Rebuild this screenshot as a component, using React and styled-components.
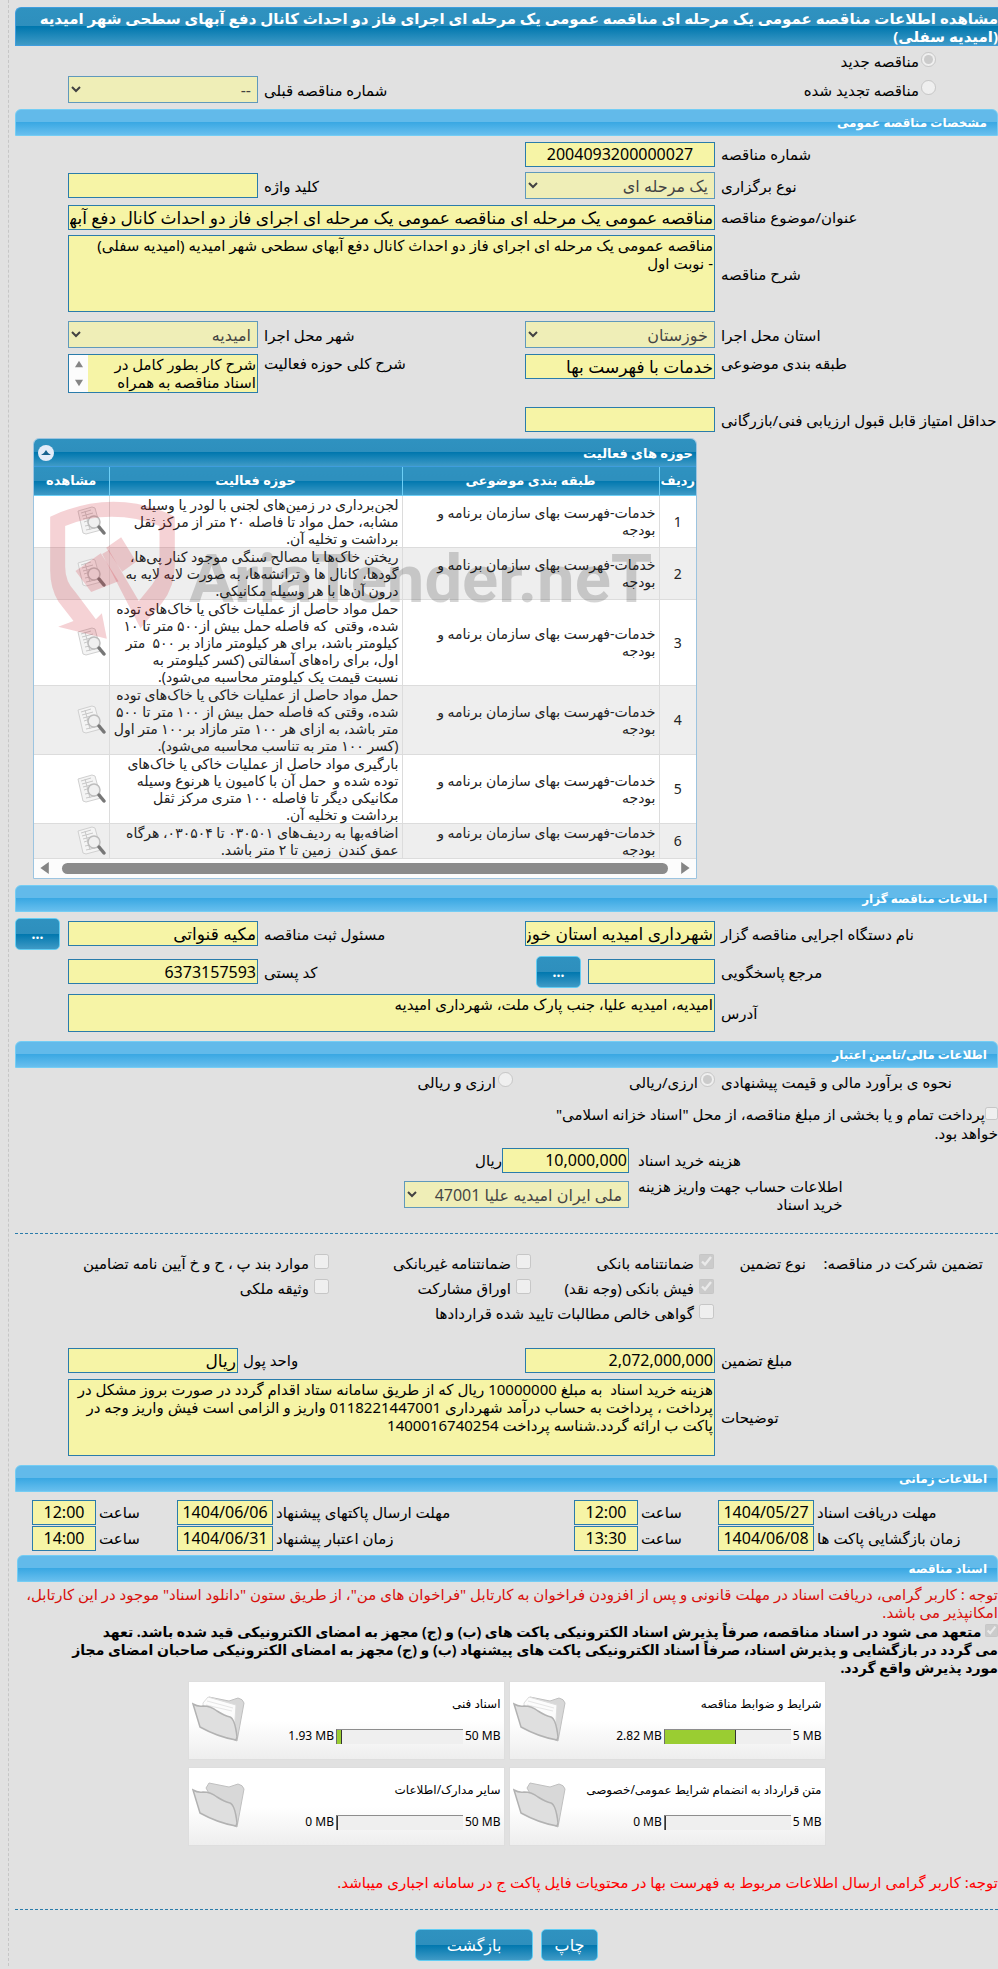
import React from "react";
import styled, {createGlobalStyle} from "styled-components";

const GlobalStyle = createGlobalStyle`
  * {
    box-sizing: border-box;
  }
  body {
    margin: 0;
    background: #e1e1e1;
    color: #000;
    direction: rtl;
    font-family: "Noto Sans", "DejaVu Sans", sans-serif;
    font-size: 15px;
    line-height: 18px;
  }
  input, select, textarea, button {
    margin: 0;
    font-family: inherit;
  }
`;

const darkBlue = "linear-gradient(#2f92c0 0%, #2e8fbd 49%, #0077ae 50%, #3f9ac6 100%)";

const Page = styled.main`
  margin-left: 8px;
  padding: 7px 0 5px 6px;
  border-left: 1px dashed #c6c6c6;
`;

const Banner = styled.h1`
  margin: 0;
  padding: 1px 0;
  height: 39px;
  border: 1px solid #3f9ddd;
  border-right: none;
  border-radius: 6px 0 0 0;
  background: ${darkBlue};
  color: #fff;
  font-size: 15px;
  line-height: 18px;
  white-space: pre-line;
`;

const SectionTitle = styled.h2`
  margin: ${props => props.$top || 0}px 0 0 ${props => props.$left || 0}px;
  padding: 0 10px;
  height: 27px;
  border: 1px solid #74cdf4;
  border-radius: 6px 6px 0 0;
  background: linear-gradient(#62baea 0%, #62baea 49%, #3aa8e3 50%, #68bfee 100%);
  color: #fff;
  font-size: 12px;
  line-height: 25px;
`;

const Row = styled.div`
  display: grid;
  grid-template-columns: minmax(0, 277fr) 190px minmax(0, 255fr) 190px 47px;
  column-gap: 6px;
  align-items: ${props => props.$align || "center"};
  margin-top: ${props => props.$top || 0}px;
  min-height: ${props => props.$height || 24}px;
`;

const CostRow = styled(Row)`
  grid-template-columns: 360px 225px 1fr;
  column-gap: 9px;
`;

const TimeRow = styled(Row)`
  grid-template-columns: 181px 96px 74px 64px minmax(0, 1fr) 96px 75px 64px 14px;
  column-gap: 3px;
`;

const GuaranteeGrid = styled.div`
  display: grid;
  grid-template-columns: 177px 92px 183px 202px 1fr;
  grid-auto-rows: 25px;
  align-items: center;
  margin-top: 17px;
  padding-right: 15px;
`;

const Label = styled.label`
  text-align: left;
  white-space: pre;
`;

const TwoLineLabel = styled(Label)`
  justify-self: end;
  text-align: right;
`;

const UnitLabel = styled(Label)`
  margin-right: auto;
`;

const Span = styled.div`
  grid-column: span ${props => props.$cols};
  display: flex;
  align-items: center;
  gap: ${props => props.$gap || 0}px;
  padding-right: ${props => props.$right || 0}px;
`;

const Input = styled.input`
  width: ${props => props.$width || "100%"};
  height: 25px;
  padding: 0 1px;
  border: 1px solid #2a7cab;
  background: #f6f4a6;
  color: #000;
  font-size: ${props => props.$size || 16}px;
  text-align: ${props => props.$align || "right"};
`;

const Select = styled.select`
  width: 100%;
  height: 27px;
  padding: 0 2px;
  border: 1px solid #2a7cab;
  border-radius: 0;
  background: #f6f4a6;
  color: #000;
  font-size: 16px;
`;

const TextArea = styled.textarea`
  grid-column: span ${props => props.$cols || 1};
  display: block;
  width: 100%;
  height: ${props => props.$height}px;
  padding: 0 1px;
  border: 1px solid #2a7cab;
  background: #f6f4a6;
  color: #000;
  font-size: 15px;
  line-height: 18px;
  white-space: pre;
  overflow: hidden;
  resize: none;
`;

const ScrollField = styled.div`
  display: flex;
  height: 39px;
  border: 1px solid #2a7cab;

  textarea {
    flex: 1;
    min-width: 0;
    height: 100%;
    border: none;
  }
`;

const ScrollButtons = styled.div`
  width: 19px;
  padding: 5px 0;
  display: flex;
  flex-direction: column;
  justify-content: space-between;
  align-items: center;
  background: #fcfcfc;
`;

const Choice = styled.label`
  display: flex;
  align-items: center;
  gap: ${props => props.$gap || 2}px;
  white-space: nowrap;

  input {
    width: 15px;
    height: 15px;
    margin-bottom: 4px;
  }
`;

const InlineChoice = styled.label`
  display: block;
  margin-top: ${props => props.$top}px;
  font-size: ${props => props.$bold ? 14 : 15}px;
  font-weight: ${props => props.$bold ? "bold" : "normal"};
  line-height: ${props => props.$bold ? 18 : 19}px;
  white-space: pre;

  input {
    width: 13px;
    height: 13px;
    vertical-align: 0;
  }
`;

const BlueButton = styled.button`
  width: ${props => props.$width}px;
  height: 32px;
  padding: 0;
  border: 1px solid #62cdf3;
  border-radius: 5px;
  background: ${darkBlue};
  color: #fff;
  font-size: 16px;
  cursor: pointer;
`;

const MoreButton = styled(BlueButton)`
  justify-self: end;
  font-size: 14px;
  font-weight: bold;
`;

const Divider = styled.hr`
  height: 0;
  margin: ${props => props.$top}px 0 0;
  border: none;
  border-top: 1px dashed #2a7cab;
`;

const Notice = styled.p`
  margin: ${props => props.$top}px 0 0;
  color: ${props => props.$color};
  white-space: pre-line;
`;

// activity table

const Panel = styled.section`
  position: relative;
  margin: 6px 301px 0 18px;
  border: 1px solid #9cc4e0;
  border-radius: 6px 6px 0 0;
  background: #fff;
`;

const PanelHeader = styled.header`
  display: flex;
  align-items: center;
  justify-content: space-between;
  height: 28px;
  padding: 0 3px 0 4px;
  border-radius: 5px 5px 0 0;
  border-bottom: 1px solid #3f9ddd;
  background: ${darkBlue};
  color: #fff;

  h3 {
    margin: 0;
    font-size: 13px;
  }
`;

const CollapseButton = styled.button`
  width: 16px;
  height: 16px;
  padding: 0;
  display: flex;
  align-items: center;
  justify-content: center;
  border: none;
  border-radius: 8px;
  background: #e3ebf8;
`;

const Table = styled.table`
  width: 100%;
  table-layout: fixed;
  border-collapse: collapse;
  color: #222;
  font-size: 14px;
  line-height: 17px;

  th {
    height: 28px;
    padding: 0;
    border-bottom: 1px solid #6dcff6;
    border-left: 1px solid #6dcff6;
    background: ${darkBlue};
    color: #fff;
    font-size: 13px;
  }
  td {
    padding: 0 3px;
    border-left: 1px solid #dcdcdc;
    border-bottom: 1px solid #dcdcdc;
    white-space: pre;
  }
  th:last-child, td:last-child {
    border-left: none;
  }
  tbody tr:nth-child(even) {
    background: #eee;
  }
  td:first-child {
    padding: 0;
    text-align: center;
  }
  td:last-child {
    padding: 0 2px;
  }
`;

const IconButton = styled.button`
  display: block;
  width: 30px;
  height: 30px;
  padding: 0;
  border: none;
  background: none;
`;

const ScrollBar = styled.div`
  display: flex;
  align-items: center;
  justify-content: space-between;
  gap: 12px;
  height: 19px;
  padding: 0 4px;
  background: #fcfcfc;
`;

const Thumb = styled.div`
  flex: 1;
  height: 11px;
  border-radius: 6px;
  background: #8b8b8b;
`;

const Watermark = styled.div`
  position: absolute;
  top: 62px;
  left: 16px;
  display: flex;
  direction: ltr;
  gap: 14px;
  pointer-events: none;

  span {
    padding-top: 46px;
    color: rgba(0, 0, 0, 0.17);
    font: bold 67px/64px Roboto, sans-serif;
  }
`;

// document cards

const Cards = styled.div`
  display: grid;
  grid-template-columns: 317px 317px;
  gap: 7px 4px;
  justify-content: center;
  margin-top: 4px;
`;

const Card = styled.article`
  display: flex;
  align-items: center;
  height: 79px;
  padding: 0 3px;
  border: 1px solid #dedede;
  background: linear-gradient(#fff 50%, #eee);
  font-size: 12px;
  line-height: 16px;
`;

const CardBody = styled.div`
  flex: 1;
  min-width: 0;
  display: flex;
  flex-direction: column;
  gap: 16px;
  white-space: nowrap;
`;

const Usage = styled.div`
  display: grid;
  grid-template-columns: 1fr 127px auto;
  align-items: center;
  gap: 2px;
  direction: ltr;

  span:first-child {
    text-align: right;
  }
`;

const Meter = styled.div`
  height: 15px;
  border-top: 1px solid #8d8d8d;
  border-left: 1px solid #6d6d6d;
  background: #efefef;
`;

const MeterFill = styled.div`
  height: 100%;
  border-right: 1px solid #333;
  background: #9acd32;
`;

const Actions = styled.footer`
  display: flex;
  justify-content: center;
  gap: 8px;
  margin-top: 19px;
`;

const activities = [
    "لجن‌برداری در زمین‌های لجنی با لودر یا وسیله\nمشابه، حمل مواد تا فاصله ۲۰ متر از مرکز ثقل\nبرداشت و تخلیه آن.",
    "ریختن خاک‌ها یا مصالح سنگی موجود کنار پی‌ها،\nگودها، کانال ها و ترانشه‌ها، به صورت لایه لایه به\nدرون آن‌ها با هر وسیله مکانیکی.",
    "حمل مواد حاصل از عملیات خاکی یا خاک‌های توده\nشده، وقتی  که فاصله حمل بیش از۵۰۰ متر تا ۱۰\nکیلومتر باشد، برای هر کیلومتر مازاد بر ۵۰۰  متر\nاول، برای راه‌های آسفالتی (کسر کیلومتر به\nنسبت قیمت یک کیلومتر محاسبه می‌شود).",
    "حمل مواد حاصل از عملیات خاکی یا خاک‌های توده\nشده، وقتی که فاصله حمل بیش از ۱۰۰ متر تا ۵۰۰\nمتر باشد، به ازای هر ۱۰۰ متر مازاد بر۱۰۰ متر اول\n(کسر ۱۰۰ متر به تناسب محاسبه می‌شود).",
    "بارگیری مواد حاصل از عملیات خاکی یا خاک‌های\nتوده شده و  حمل آن با کامیون یا هرنوع وسیله\nمکانیکی دیگر تا فاصله ۱۰۰ متری مرکز ثقل\nبرداشت و تخلیه آن.",
    "اضافه‌بها به ردیف‌های ۰۳۰۵۰۱ تا ۰۳۰۵۰۴، هرگاه\nعمق کندن  زمین تا ۲ متر باشد.",
];

const documents = [
    {title: "شرایط و ضوابط مناقصه", used: 2.82, max: 5},
    {title: "اسناد فنی", used: 1.93, max: 50},
    {title: "متن قرارداد به انضمام شرایط عمومی/خصوصی", used: 0, max: 5},
    {title: "سایر مدارک/اطلاعات", used: 0, max: 50},
];

const Triangle = ({points, size = 8}) => (
    <svg width={size} height={size} viewBox="0 0 10 10"><polygon points={points} fill="#858585"/></svg>
);

const DocumentIcon = () => (
    <svg width="30" height="30" viewBox="0 0 30 30">
        <path d="M1 5 15 1l3 1 6 22-15 4-3-1z" fill="#f4f4f4" stroke="#d0d0d0"/>
        <path d="m4 7 10-3M5 10l11-3M6 13l8-2M7 16l6-2M8 20l5-1M9 24l9-2M8 5l5 19" stroke="#c8c8c8" fill="none"/>
        <circle cx="17" cy="16" r="6" fill="#efefef" fillOpacity=".85" stroke="#bdbdbd" strokeWidth="1.5"/>
        <path d="m22 21 5 6" stroke="#777" strokeWidth="3.5" strokeLinecap="round"/>
    </svg>
);

const FolderIcon = ({filled}) => (
    <svg width="54" height="48" viewBox="0 0 54 48">
        <path d="M14 6 17 1l20 4 9-3q5 1 6 5l-7 38-12-5z" fill="#d8d8d8" stroke="#c0c0c0"/>
        {filled && <path d="m11 7 5-6 28 8-2 30-30-8z" fill="#fcfcfc" stroke="#dcdcdc"/>}
        {filled && <path d="m14 9 26 6M15 5l26 7" stroke="#e6e6e6" fill="none"/>}
        <path d="M1 8q5 3 10 2 8 0 14 5 8 5 13 6 5 2 7 20l-1 3q-18-3-36-13z" fill="#dfdfdf" stroke="#b2b2b2" strokeWidth="1.5"/>
    </svg>
);

const Shield = () => (
    <svg width="125" height="138" viewBox="60 193 374 414" fill="#cc1f2d" fillOpacity=".2">
        <path d="M60 240Q155 195 250 195T434 240V385Q434 450 395 500L331 575 216 352 236 340 326 493 365 445Q388 415 388 370V268Q320 240 245 240T105 268V390Q105 435 135 465L197 548 215 530 230 606 84 570 130 553 85 495Q60 455 60 400Z"/>
        <path d="m228 333 45-31 45 73-42 30zM136 403l76-53 53 84-82 32z"/>
    </svg>
);

const Pick = ({type = "checkbox", checked, name, children, gap}) => (
    <Choice $gap={gap}>
        <input type={type} name={name} defaultChecked={checked} disabled/>
        {children}
    </Choice>
);

const Time = ({id, label, date, hour}) => (
    <>
        <Label htmlFor={id}>{label}</Label>
        <Input id={id} $align="center" defaultValue={date}/>
        <Label htmlFor={id + "Hour"}>ساعت</Label>
        <Input id={id + "Hour"} $align="center" defaultValue={hour}/>
    </>
);

const TenderHead = () => (
    <>
        <Banner>{"مشاهده اطلاعات مناقصه عمومی یک مرحله ای مناقصه عمومی یک مرحله ای اجرای فاز دو احداث کانال دفع آبهای سطحی شهر امیدیه\n(امیدیه سفلی)"}</Banner>
        <Row $height={30}>
            <Span $cols={2} $right={62}><Pick type="radio" name="kind" checked>مناقصه جدید</Pick></Span>
        </Row>
        <Row $height={27}>
            <Span $cols={2} $right={62}><Pick type="radio" name="kind">مناقصه تجدید شده</Pick></Span>
            <Label htmlFor="previous">شماره مناقصه قبلی</Label>
            <Select id="previous" disabled><option>--</option></Select>
        </Row>
    </>
);

const TenderDetails = () => (
    <>
        <SectionTitle $top={6}>مشخصات مناقصه عمومی</SectionTitle>
        <Row $height={36}>
            <Label htmlFor="number">شماره مناقصه</Label>
            <Input id="number" $align="center" defaultValue="2004093200000027"/>
        </Row>
        <Row $height={27}>
            <Label htmlFor="method">نوع برگزاری</Label>
            <Select id="method" disabled><option>یک مرحله ای</option></Select>
            <Label htmlFor="keyword">کلید واژه</Label>
            <Input id="keyword"/>
        </Row>
        <Row $height={36}>
            <Label htmlFor="title">عنوان/موضوع مناقصه</Label>
            <Span $cols={3}>
                <Input id="title" $size={17} defaultValue="مناقصه عمومی یک مرحله ای مناقصه عمومی یک مرحله ای اجرای فاز دو احداث کانال دفع آبهای سطحی شهر امیدیه (امیدیه سفلی)"/>
            </Span>
        </Row>
        <Row $height={77}>
            <Label htmlFor="description">شرح مناقصه</Label>
            <TextArea id="description" $cols={3} $height={77}
                      defaultValue={"مناقصه عمومی یک مرحله ای اجرای فاز دو احداث کانال دفع آبهای سطحی شهر امیدیه (امیدیه سفلی)\n- نوبت اول"}/>
        </Row>
        <Row $top={9} $height={27}>
            <Label htmlFor="province">استان محل اجرا</Label>
            <Select id="province" disabled><option>خوزستان</option></Select>
            <Label htmlFor="city">شهر محل اجرا</Label>
            <Select id="city" disabled><option>امیدیه</option></Select>
        </Row>
        <Row $top={6} $height={38} $align="start">
            <Label htmlFor="category">طبقه بندی موضوعی</Label>
            <Input id="category" $size={17} defaultValue="خدمات با فهرست بها"/>
            <Label htmlFor="scope">شرح کلی حوزه فعالیت</Label>
            <ScrollField>
                <TextArea id="scope" defaultValue={"شرح کار بطور کامل در\nاسناد مناقصه به همراه"}/>
                <ScrollButtons>
                    <Triangle points="0,9 5,1 10,9"/>
                    <Triangle points="0,1 5,9 10,1"/>
                </ScrollButtons>
            </ScrollField>
        </Row>
        <Row $top={14} $height={25}>
            <Label htmlFor="minScore">حداقل امتیاز قابل قبول ارزیابی فنی/بازرگانی</Label>
            <Input id="minScore"/>
        </Row>
    </>
);

const Activities = () => (
    <Panel>
        <PanelHeader>
            <h3>حوزه های فعالیت</h3>
            <CollapseButton aria-label="بستن">
                <svg width="10" height="6" viewBox="0 0 10 6"><path d="M0 5Q3 4 5 0 7 4 10 5z" fill="#17628f"/></svg>
            </CollapseButton>
        </PanelHeader>
        <Table>
            <colgroup>
                <col width="37"/>
                <col width="257"/>
                <col/>
                <col width="75"/>
            </colgroup>
            <thead>
                <tr><th>ردیف</th><th>طبقه بندی موضوعی</th><th>حوزه فعالیت</th><th>مشاهده</th></tr>
            </thead>
            <tbody>
                {activities.map((text, i) => (
                    <tr key={i}>
                        <td>{i + 1}</td>
                        <td>{"خدمات-فهرست بهای سازمان برنامه و\nبودجه"}</td>
                        <td>{text}</td>
                        <td><IconButton aria-label="مشاهده"><DocumentIcon/></IconButton></td>
                    </tr>
                ))}
            </tbody>
        </Table>
        <ScrollBar>
            <Triangle size={12} points="1,0 8,5 1,10"/>
            <Thumb/>
            <Triangle size={12} points="9,0 2,5 9,10"/>
        </ScrollBar>
        <Watermark>
            <Shield/>
            <span>AriaTender.neT</span>
        </Watermark>
    </Panel>
);

const Organizer = () => (
    <>
        <SectionTitle $top={6}>اطلاعات مناقصه گزار</SectionTitle>
        <Row $top={6} $height={32}>
            <Label htmlFor="agency">نام دستگاه اجرایی مناقصه گزار</Label>
            <Input id="agency" $size={17} defaultValue="شهرداری امیدیه استان خوزستان"/>
            <Label htmlFor="registrar">مسئول ثبت مناقصه</Label>
            <Input id="registrar" $size={17} defaultValue="مکیه قنواتی"/>
            <MoreButton $width={45}>...</MoreButton>
        </Row>
        <Row $top={6} $height={32}>
            <Label htmlFor="contact">مرجع پاسخگویی</Label>
            <Span $cols={1} $gap={7}>
                <Input id="contact" $width="127px"/>
                <MoreButton $width={45}>...</MoreButton>
            </Span>
            <Label htmlFor="postal">کد پستی</Label>
            <Input id="postal" defaultValue="6373157593"/>
        </Row>
        <Row $top={6} $height={38}>
            <Label htmlFor="address">آدرس</Label>
            <TextArea id="address" $cols={3} $height={38} defaultValue="امیدیه، امیدیه علیا، جنب پارک ملت، شهرداری امیدیه"/>
        </Row>
    </>
);

const Finance = () => (
    <>
        <SectionTitle $top={9}>اطلاعات مالی/تامین اعتبار</SectionTitle>
        <Row $height={28}>
            <Label as="span">نحوه ی برآورد مالی و قیمت پیشنهادی</Label>
            <Pick type="radio" name="currency" checked>ارزی/ریالی</Pick>
            <Span $cols={3} $right={6}><Pick type="radio" name="currency">ارزی و ریالی</Pick></Span>
        </Row>
        <InlineChoice $top={9}>
            <input type="checkbox" disabled/>
            {"پرداخت تمام و یا بخشی از مبلغ مناقصه، از محل \"اسناد خزانه اسلامی\"\nخواهد بود."}
        </InlineChoice>
        <CostRow $top={5}>
            <Label htmlFor="price">هزینه خرید اسناد</Label>
            <Span $cols={2}><Input id="price" $width="127px" defaultValue="10,000,000"/>ریال</Span>
        </CostRow>
        <CostRow $top={4} $height={36}>
            <TwoLineLabel htmlFor="account">{"اطلاعات حساب جهت واریز هزینه\nخرید اسناد"}</TwoLineLabel>
            <Select id="account" disabled><option>ملی ایران امیدیه علیا 47001</option></Select>
        </CostRow>
        <Divider $top={20}/>
        <GuaranteeGrid>
            <span>تضمین شرکت در مناقصه:</span>
            <span>نوع تضمین</span>
            <Pick checked gap={5}>ضمانتنامه بانکی</Pick>
            <Pick gap={5}>ضمانتنامه غیربانکی</Pick>
            <Pick gap={5}>موارد بند پ ، ح و خ آیین نامه تضامین</Pick>
            <Span $cols={2}/>
            <Pick checked gap={5}>فیش بانکی (وجه نقد)</Pick>
            <Pick gap={5}>اوراق مشارکت</Pick>
            <Pick gap={5}>وثیقه ملکی</Pick>
            <Span $cols={2}/>
            <Span $cols={2}><Pick gap={5}>گواهی خالص مطالبات تایید شده قراردادها</Pick></Span>
        </GuaranteeGrid>
        <Row $top={22} $height={25}>
            <Label htmlFor="amount">مبلغ تضمین</Label>
            <Input id="amount" defaultValue="2,072,000,000"/>
            <Span $cols={2} $gap={5}>
                <UnitLabel htmlFor="unit">واحد پول</UnitLabel>
                <Input id="unit" $width="170px" $size={17} defaultValue="ریال"/>
            </Span>
        </Row>
        <Row $top={6} $height={77}>
            <Label htmlFor="notes">توضیحات</Label>
            <TextArea id="notes" $cols={3} $height={77}
                      defaultValue={"هزینه خرید اسناد  به مبلغ 10000000 ریال که از طریق سامانه ستاد اقدام گردد در صورت بروز مشکل در\nپرداخت ، پرداخت به حساب درآمد شهرداری 0118221447001 واریز و الزامی است فیش واریز وجه در\nپاکت ب ارائه گردد.شناسه پرداخت 1400016740254"}/>
        </Row>
    </>
);

const Schedule = () => (
    <>
        <SectionTitle $top={9}>اطلاعات زمانی</SectionTitle>
        <TimeRow $top={8}>
            <Time id="receive" label="مهلت دریافت اسناد" date="1404/05/27" hour="12:00"/>
            <Time id="send" label="مهلت ارسال پاکتهای پیشنهاد" date="1404/06/06" hour="12:00"/>
        </TimeRow>
        <TimeRow $top={1}>
            <Time id="open" label="زمان بازگشایی پاکت ها" date="1404/06/08" hour="13:30"/>
            <Time id="valid" label="زمان اعتبار پیشنهاد" date="1404/06/31" hour="14:00"/>
        </TimeRow>
    </>
);

const Documents = () => (
    <>
        <SectionTitle $top={4} $left={2}>اسناد مناقصه</SectionTitle>
        <Notice $top={3} $color="#d8100c">
            {"توجه : کاربر گرامی، دریافت اسناد در مهلت قانونی و پس از افزودن فراخوان به کارتابل \"فراخوان های من\"، از طریق ستون \"دانلود اسناد\" موجود در این کارتابل،\nامکانپذیر می باشد."}
        </Notice>
        <InlineChoice $top={2} $bold>
            <input type="checkbox" defaultChecked disabled/>
            {" متعهد می شود در اسناد مناقصه، صرفاً پذیرش اسناد الکترونیکی پاکت های (ب) و (ج) مجهز به امضای الکترونیکی قید شده باشد. تعهد\nمی گردد در بازگشایی و پذیرش اسناد، صرفاً اسناد الکترونیکی پاکت های پیشنهاد (ب) و (ج) مجهز به امضای الکترونیکی صاحبان امضای مجاز\nمورد پذیرش واقع گردد."}
        </InlineChoice>
        <Cards>
            {documents.map(doc => (
                <Card key={doc.title}>
                    <CardBody>
                        <span>{doc.title}</span>
                        <Usage>
                            <span>{doc.used} MB</span>
                            <Meter><MeterFill style={{width: doc.used / doc.max * 100 + "%"}}/></Meter>
                            <span>{doc.max} MB</span>
                        </Usage>
                    </CardBody>
                    <FolderIcon filled={doc.used > 0}/>
                </Card>
            ))}
        </Cards>
        <Notice $top={27} $color="#f00">توجه: کاربر گرامی ارسال اطلاعات مربوط به فهرست بها در محتویات فایل پاکت ج در سامانه اجباری میباشد.</Notice>
    </>
);

const App = () => {
    return (
        <Page>
            <GlobalStyle/>
            <TenderHead/>
            <TenderDetails/>
            <Activities/>
            <Organizer/>
            <Finance/>
            <Schedule/>
            <Documents/>
            <Divider $top={18}/>
            <Actions>
                <BlueButton $width={57}>چاپ</BlueButton>
                <BlueButton $width={118}>بازگشت</BlueButton>
            </Actions>
        </Page>
    )
}

export default App
